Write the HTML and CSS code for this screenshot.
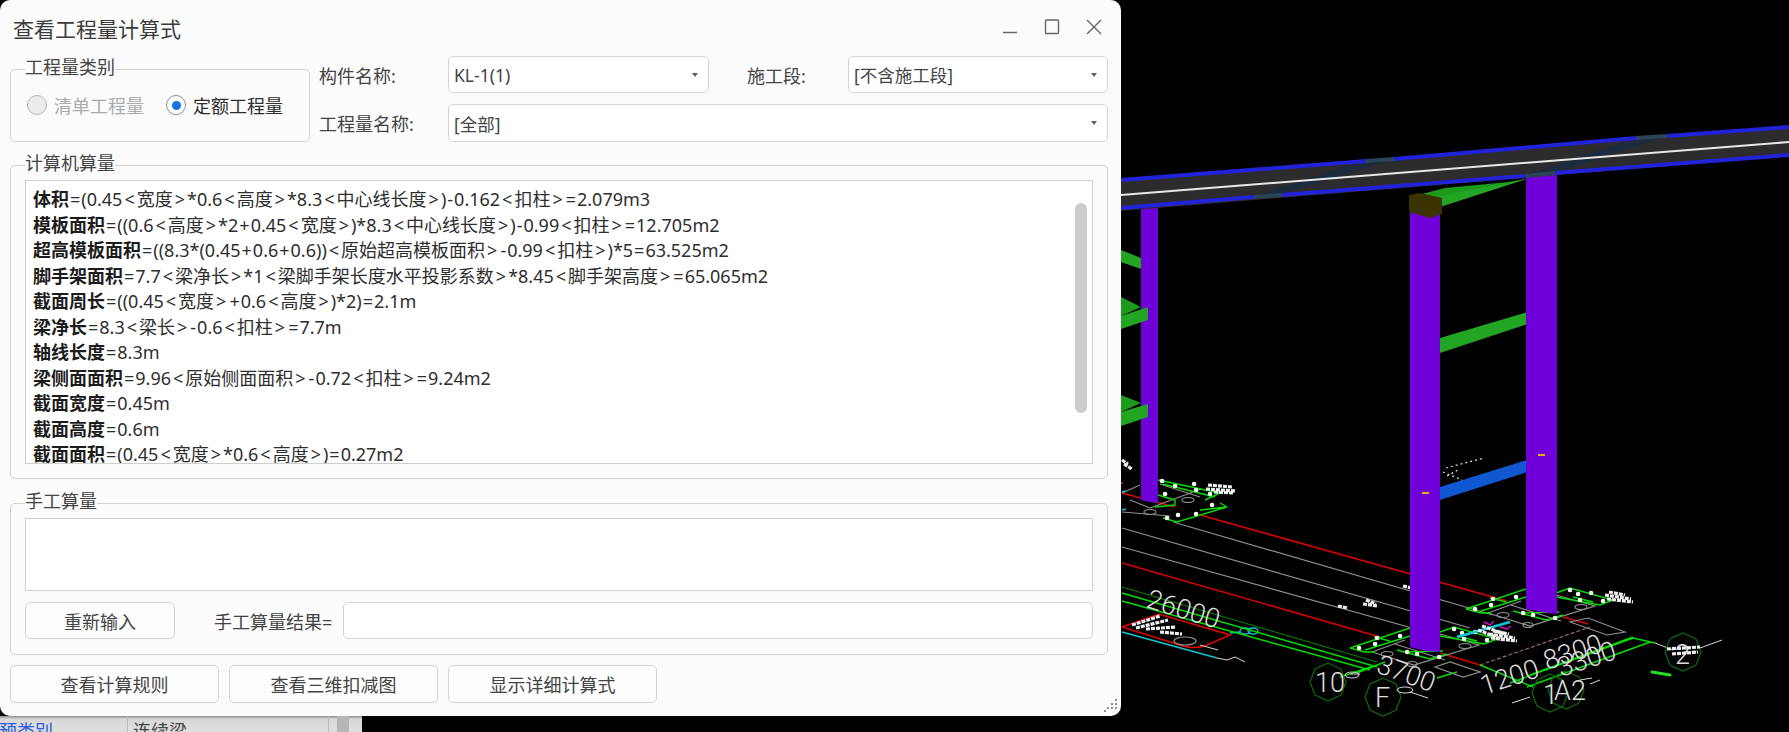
FILE: index.html
```html
<!DOCTYPE html>
<html lang="zh-CN">
<head>
<meta charset="utf-8">
<title>查看工程量计算式</title>
<link rel="stylesheet" href="styles.css">
</head>
<body>
<svg class="scene" width="1789" height="732" viewBox="0 0 1789 732" xmlns="http://www.w3.org/2000/svg">
  <defs>
    <g id="plate">
      <path class="gray" d="M-53 0L-11 13L54 -7L15 -18M-53 0L-20 -12M-30 -8L20 8"/>
      <ellipse class="gray" cx="-38" cy="2" rx="6" ry="2.5"/>
      <ellipse class="gray" cx="-13" cy="12" rx="5" ry="2.5"/>
      <ellipse class="gray" cx="40" cy="-6" rx="6" ry="2.5"/>
      <path class="green" d="M-75 -4L-15 -24M-75 -4L-60 0L-50 0M-60 -2L-15 -16M-51 -15L-35 -11M-28 -2L5 7L22 2M-20 0L18 -1M15 -20L29 -25L72 -13L59 -8L15 -16M32 -16L52 -11"/>
      <path class="dot" d="M-66 -4h.1M-48 -14h.1M-50 -8h.1M-25 -16h.1M-18 0h.1M14 5h.1M29 -23h.1M37 -19h.1M50 -20h.1M62 -12h.1M39 -13h.1M-8 2h.1"/>
      <path class="blob" d="M64 -18L90 -14M66 -14L92 -11M68 -21L84 -18"/>
    </g>
    <path id="oct" d="M0 -19L13 -13L18 0L13 13L0 19L-13 13L-18 0L-13 -13Z"/>
  </defs>

  <!-- floor plan lines -->
  <path class="red" d="M1200 515L1507 601M1122 493L1175 507"/>
  <path class="gray" d="M1173 522L1493 615M1122 528L1470 628M1122 547L1430 633"/>
  <path class="red" d="M1122 563L1380 637M1440 653L1480 665M1563 617L1588 624"/>
  <path class="redgray" d="M1480 665L1590 627"/>
  <path class="redline" d="M1122 627L1159 614L1230 635L1205 646Q1194 649 1183 646Z"/>
  <path class="cyan" d="M1122 632L1217 658M1230 633L1240 632"/>
  <ellipse class="cyan" cx="1245" cy="631" rx="5" ry="3"/>
  <ellipse class="cyan" cx="1253" cy="631" rx="5" ry="3"/>
  <path class="blob" d="M1132 625L1160 616M1136 628L1168 620M1146 629L1176 627M1160 632L1182 634"/>
  <path class="thin" d="M1217 658L1227 660L1235 657L1245 662M1200 645L1218 650"/>
  <ellipse class="gray" cx="1185" cy="641" rx="11" ry="4"/>
  <path class="dg" d="M1122 587L1377 662"/>
  <path class="green" d="M1122 593L1377 667M1122 601L1370 670M1377 665L1340 677M1385 662L1357 673"/>
  <path class="green" d="M1480 665L1533 687M1510 683L1633 638L1655 643M1527 687L1650 642M1530 675L1633 637M1437 678L1457 672"/>
  <path class="thin" d="M1655 643L1673 650M1350 674L1360 674"/>
  <path class="greenbar" d="M1652 672L1670 675"/>
  <path class="blob" d="M1403 586L1412 588M1363 604L1378 606M1366 600L1376 604M1338 606L1348 608"/>
  <path class="blob" d="M1124 464L1132 469M1122 460L1128 464"/>

  <!-- first column base -->
  <g class="foot-left">
    <path class="gray" d="M1122 493L1140 485M1130 500L1150 508M1122 512L1170 516M1150 508L1201 489M1160 484L1200 497"/>
    <ellipse class="gray" cx="1188" cy="500" rx="6" ry="2.5"/>
    <ellipse class="gray" cx="1150" cy="512" rx="6" ry="2.5"/>
    <path class="green" d="M1158 480L1220 493L1205 500M1163 484L1215 497M1158 495L1175 500L1175 505L1155 507M1227 507L1177 522L1163 518M1220 503L1227 507M1200 510L1227 507"/>
    <path class="dot" d="M1162 481h.1M1175 486h.1M1194 484h.1M1196 490h.1M1210 494h.1M1165 494h.1M1212 505h.1M1178 515h.1M1196 514h.1M1167 518h.1"/>
    <path class="blob" d="M1206 489L1236 491M1208 485L1232 487M1214 492L1234 493"/>
    <path class="cyan" d="M1122 492L1126 491M1122 510L1126 509"/>
    <path class="magenta" d="M1122 482L1122 484"/>
  </g>
  <use href="#plate" x="1425" y="652"/>
  <use href="#plate" x="1541" y="613"/>
  <path class="magenta" d="M1484 622L1490 625L1494 621M1500 627L1507 629L1511 626"/>
  <path class="cyan2" d="M1457 637L1510 622"/>
  <path class="blob" d="M1478 630L1503 640M1482 626L1505 634"/>
  <path class="gray" d="M1570 622L1588 618L1625 632L1607 635ZM1435 667L1450 662L1480 672L1463 677Z"/>

  <!-- structure -->
  <polygon class="c-green" points="1121,250 1141,258 1141,269 1121,262"/>
  <polygon class="c-purple" points="1141,205 1158,205 1158,503 1150,502 1141,500"/>
  <polygon class="c-green2" points="1121,297 1141,307 1121,316"/>
  <polygon class="c-green" points="1121,316 1148,307 1148,320 1121,329"/>
  <polygon class="c-green2" points="1121,395 1141,403 1121,412"/>
  <polygon class="c-green" points="1121,412 1148,404 1148,417 1121,426"/>

  <polygon class="c-green2" points="1418,195 1445,188 1520,181 1440,200"/>
  <polygon class="c-green" points="1440,196 1530,178 1440,207"/>
  <polygon class="c-green" points="1440,338 1534,310 1540,308 1540,320 1440,353"/>
  <polygon class="c-blue" points="1440,487 1540,456 1540,468 1440,500"/>
  <polygon class="c-purple" points="1410,212 1440,212 1440,652 1425,651 1410,647"/>
  <polygon class="c-purple" points="1526,172 1557,172 1557,614 1541,612 1526,609"/>
  <polygon class="c-cap" points="1409,195 1420,193 1442,198 1442,214 1430,218 1409,212"/>
  <path class="gold" d="M1422 493L1429 493M1538 455L1545 455"/>
  <path class="blob2" d="M1443 472L1462 480M1446 468L1484 458M1447 476L1458 470"/>

  <polygon class="c-road" points="1121,179 1789,127 1789,156 1121,211"/>
  <polygon class="c-slab" points="1282,194 1394,159 1366,160 1254,196"/>
  <polygon class="c-slab" points="1555,173 1667,136 1636,138 1525,175"/>
  <path class="blue" d="M1121 180L1366 161M1394 159L1636 138M1667 136L1789 127"/>
  <path class="blue" d="M1121 208L1254 197M1282 195L1525 176M1555 173L1789 155"/>
  <path class="slabedge" d="M1366 161L1394 159M1636 138L1667 136M1254 197L1282 195M1525 176L1555 173"/>
  <path class="white" d="M1121 195L1789 142"/>

  <g class="labels">
    <use href="#oct" class="oct" x="1328" y="682"/>
    <use href="#oct" class="oct" x="1383" y="697"/>
    <use href="#oct" class="oct" x="1550" y="693"/>
    <use href="#oct" class="oct" x="1566" y="690"/>
    <use href="#oct" class="oct" x="1683" y="652"/>
    <text x="1315" y="692">10</text>
    <text x="1375" y="707">F</text>
    <text x="1543" y="704">1</text>
    <text x="1554" y="700">A2</text>
    <text x="1675" y="664">2</text>
    <text transform="translate(1145 607) rotate(17)">26000</text>
    <text transform="translate(1375 672) rotate(20)">3700</text>
    <text transform="translate(1484 695) rotate(-18)">1200</text>
    <text transform="translate(1547 670) rotate(-18)">8300</text>
    <text transform="translate(1561 677) rotate(-18)">3300</text>
  </g>
  <path class="blob" d="M1667 649L1700 647M1672 654L1698 652"/>
  <path class="thin" d="M1700 648L1722 640M1600 680L1590 684M1530 697L1512 703M1580 680L1592 678"/>
  <ellipse class="thin" cx="1352" cy="675" rx="7" ry="3"/>
  <ellipse class="thin" cx="1405" cy="690" rx="8" ry="3"/>
  <path class="thin" d="M1410 692L1428 698"/>
</svg>

<div class="strip">
  <span class="strip-key">预类别</span>
  <span class="strip-val">连续梁</span>
  <span class="strip-bar"></span>
</div>

<main class="dialog">
  <header class="titlebar">
    <h1 class="title">查看工程量计算式</h1>
    <div class="win-btns">
      <svg class="win-icon" width="16" height="16" viewBox="0 0 16 16"><path d="M1 13.5H15"/></svg>
      <svg class="win-icon" width="16" height="16" viewBox="0 0 16 16"><rect x="1.5" y="1" width="13" height="13.5" rx="1"/></svg>
      <svg class="win-icon" width="16" height="16" viewBox="0 0 16 16"><path d="M1 1L15 15M15 1L1 15"/></svg>
    </div>
  </header>

  <section class="top-row">
    <fieldset class="group group-type">
      <legend>工程量类别</legend>
      <div class="radios">
        <label class="radio radio-off"><span class="radio-dot"></span>清单工程量</label>
        <label class="radio radio-on"><span class="radio-dot"></span>定额工程量</label>
      </div>
    </fieldset>
    <div class="fields">
      <span class="field-label">构件名称:</span>
      <div class="combo">KL-1(1)</div>
      <span class="field-label field-label-mid">施工段:</span>
      <div class="combo">[不含施工段]</div>
      <span class="field-label">工程量名称:</span>
      <div class="combo combo-wide">[全部]</div>
    </div>
  </section>

  <fieldset class="group group-auto">
    <legend>计算机算量</legend>
    <div class="formula-box">
      <p><b>体积</b><em>=</em>(0.45<i>&lt;</i>宽度<i>&gt;</i>*0.6<i>&lt;</i>高度<i>&gt;</i>*8.3<i>&lt;</i>中心线长度<i>&gt;</i>)<em>-</em>0.162<i>&lt;</i>扣柱<i>&gt;</i><em>=</em>2.079m3</p>
      <p><b>模板面积</b><em>=</em>((0.6<i>&lt;</i>高度<i>&gt;</i>*2<em>+</em>0.45<i>&lt;</i>宽度<i>&gt;</i>)*8.3<i>&lt;</i>中心线长度<i>&gt;</i>)<em>-</em>0.99<i>&lt;</i>扣柱<i>&gt;</i><em>=</em>12.705m2</p>
      <p><b>超高模板面积</b><em>=</em>((8.3*(0.45<em>+</em>0.6<em>+</em>0.6))<i>&lt;</i>原始超高模板面积<i>&gt;</i><em>-</em>0.99<i>&lt;</i>扣柱<i>&gt;</i>)*5<em>=</em>63.525m2</p>
      <p><b>脚手架面积</b><em>=</em>7.7<i>&lt;</i>梁净长<i>&gt;</i>*1<i>&lt;</i>梁脚手架长度水平投影系数<i>&gt;</i>*8.45<i>&lt;</i>脚手架高度<i>&gt;</i><em>=</em>65.065m2</p>
      <p><b>截面周长</b><em>=</em>((0.45<i>&lt;</i>宽度<i>&gt;</i><em>+</em>0.6<i>&lt;</i>高度<i>&gt;</i>)*2)<em>=</em>2.1m</p>
      <p><b>梁净长</b><em>=</em>8.3<i>&lt;</i>梁长<i>&gt;</i><em>-</em>0.6<i>&lt;</i>扣柱<i>&gt;</i><em>=</em>7.7m</p>
      <p><b>轴线长度</b><em>=</em>8.3m</p>
      <p><b>梁侧面面积</b><em>=</em>9.96<i>&lt;</i>原始侧面面积<i>&gt;</i><em>-</em>0.72<i>&lt;</i>扣柱<i>&gt;</i><em>=</em>9.24m2</p>
      <p><b>截面宽度</b><em>=</em>0.45m</p>
      <p><b>截面高度</b><em>=</em>0.6m</p>
      <p><b>截面面积</b><em>=</em>(0.45<i>&lt;</i>宽度<i>&gt;</i>*0.6<i>&lt;</i>高度<i>&gt;</i>)<em>=</em>0.27m2</p>
      <span class="scroll-thumb"></span>
    </div>
  </fieldset>

  <fieldset class="group group-manual">
    <legend>手工算量</legend>
    <div class="manual-box"></div>
    <div class="manual-row">
      <button class="btn btn-reset" type="button">重新输入</button>
      <span class="manual-label">手工算量结果=</span>
      <div class="manual-input"></div>
    </div>
  </fieldset>

  <footer class="actions">
    <button class="btn btn-action" type="button">查看计算规则</button>
    <button class="btn btn-action" type="button">查看三维扣减图</button>
    <button class="btn btn-action" type="button">显示详细计算式</button>
  </footer>

  <svg class="grip" width="14" height="14" viewBox="0 0 14 14"><path d="M11 1h2v2h-2zM7 5h2v2H7zM11 5h2v2h-2zM3 9h2v2H3zM7 9h2v2H7zM11 9h2v2h-2zM0 12h2v2H0z"/></svg>
</main>
</body>
</html>
```

FILE: styles.css
```css
* { box-sizing: border-box; }
html, body { margin: 0; height: 100%; }
body {
  background: #000;
  overflow: hidden;
  position: relative;
  width: 1789px;
  height: 732px;
  font-family: "Noto Sans", "Noto Sans CJK SC", sans-serif;
  font-size: 18px;
  color: #3a3a3a;
}

/* CAD scene */
.scene { position: absolute; left: 0; top: 0; display: block; }
.scene path, .scene ellipse, .scene circle { fill: none; }
.red { stroke: #d80000; stroke-width: 1.6; }
.redline { stroke: #e00000; stroke-width: 1.6; }
.redgray { stroke: #8c6a6a; stroke-width: 1.2; stroke-dasharray: 4 2; }
.gray { stroke: #909090; stroke-width: 1.2; }
.green { stroke: #00e000; stroke-width: 1.4; }
.greenbar { stroke: #22e022; stroke-width: 3; stroke-linecap: round; }
.dg { stroke: #008a00; stroke-width: 1; }
.cyan { stroke: #10c8d8; stroke-width: 1.3; }
.cyan2 { stroke: #10c8d8; stroke-width: 2.5; }
.magenta { stroke: #d010d0; stroke-width: 1.4; }
.thin { stroke: #d8d8d8; stroke-width: 1; }
.dot { stroke: #f4fff4; stroke-width: 4.5; stroke-linecap: round; }
.blob { stroke: #f0f0f0; stroke-width: 3.2; stroke-dasharray: 4 1; }
.blob2 { stroke: #ddd; stroke-width: 1.2; stroke-dasharray: 2 3; }
.gold { stroke: #e8b000; stroke-width: 2; }
.blue { stroke: #2222d8; stroke-width: 4; }
.slabedge { stroke: #2b4458; stroke-width: 4; }
.white { stroke: #e8e8e8; stroke-width: 2; }
.c-purple { fill: #6f00d9; }
.c-green { fill: #22a522; }
.c-green2 { fill: #1b9a1b; }
.c-blue { fill: #0f58d2; }
.c-cap { fill: #3c3400; }
.c-road { fill: #2c2c2e; }
.c-slab { fill: #1d2b3c; }
.labels text {
  fill: #dedede;
  font-family: Roboto, sans-serif;
  font-weight: 300;
  font-size: 27px;
}
.scene .oct { fill: none; stroke: #0c6a0c; stroke-width: 1.2; }

/* Panel peeking out below the dialog */
.strip {
  position: absolute;
  left: 0;
  top: 716px;
  width: 362px;
  height: 16px;
  background: linear-gradient(#8a8a8a, #d8d8d8 3px, #dedede);
  overflow: hidden;
  font-size: 18px;
  line-height: 30px;
}
.strip-key { position: absolute; left: -1px; top: 0; color: #2a5be0; }
.strip-val { position: absolute; left: 133px; top: 0; color: #444; }
.strip-val::before {
  content: "";
  position: absolute;
  left: -6px;
  top: 0;
  height: 30px;
  border-left: 1px solid #bbb;
}
.strip-val::after {
  content: "";
  position: absolute;
  left: 195px;
  top: 0;
  height: 30px;
  border-left: 1px solid #bbb;
}
.strip-bar {
  position: absolute;
  left: 337px;
  top: 0;
  width: 12px;
  height: 16px;
  background: #b6b6b6;
  box-shadow: 17px 0 0 -16px #aaa;
}

/* Dialog window */
.dialog {
  position: absolute;
  left: 0;
  top: 0;
  width: 1121px;
  height: 716px;
  padding: 0 13px 0 10px;
  background: #fbfbfb;
  border-radius: 10px;
  display: flex;
  flex-direction: column;
}
.titlebar {
  height: 56px;
  flex: none;
  display: flex;
  align-items: flex-start;
  justify-content: space-between;
}
.title {
  margin: 14px 0 0 3px;
  font-size: 21px;
  line-height: 30px;
  font-weight: 400;
  color: #3c3c3c;
}
.win-btns {
  display: flex;
  gap: 26px;
  margin: 19px 6px 0 0;
}
.win-icon { fill: none; stroke: #666; stroke-width: 1.4; display: block; }

/* Group boxes */
.group {
  margin: 0;
  min-width: 0;
  border: 1px solid #d2d2d2;
  border-radius: 5px;
  flex: none;
}
.group legend {
  padding: 0 0 4px;
  margin-left: 0;
  font-size: 18px;
  line-height: 22px;
  color: #444;
}

.top-row { display: flex; height: 86px; flex: none; }
.group-type { width: 300px; height: 86px; padding: 11px 0 0 16px; }
.group-type legend { margin-left: -2px; }
.radios { display: flex; gap: 22px; }
.radio { display: flex; align-items: center; gap: 7px; height: 24px; font-size: 18px; white-space: nowrap; }
.radio-dot {
  width: 20px;
  height: 20px;
  border-radius: 50%;
  display: flex;
  align-items: center;
  justify-content: center;
}
.radio-off { color: #ababab; }
.radio-off .radio-dot { background: #ececec; border: 1.5px solid #b4b4b4; }
.radio-on { color: #2e2e2e; }
.radio-on .radio-dot { background: #fff; border: 1.5px solid #8f8f8f; }
.radio-on .radio-dot::after {
  content: "";
  width: 9px;
  height: 9px;
  border-radius: 50%;
  background: #1473e6;
}

.fields {
  margin-left: 9px;
  display: grid;
  grid-template-columns: 129px 261px 139px 260px;
  grid-template-rows: 37px 38px;
  row-gap: 11px;
  align-items: center;
}
.field-label { font-size: 18px; color: #444; white-space: nowrap; }
.field-label-mid { padding-left: 38px; }
.combo {
  height: 100%;
  display: flex;
  align-items: center;
  padding-left: 5px;
  background: #fff;
  border: 1px solid #d4d4d4;
  border-radius: 5px;
  color: #444;
  font-size: 17.5px;
  position: relative;
}
.combo::after {
  content: "";
  position: absolute;
  right: 10px;
  top: 50%;
  margin-top: -2px;
  border-left: 3.5px solid transparent;
  border-right: 3.5px solid transparent;
  border-top: 4px solid #5a5f6a;
}
.combo-wide { grid-column: 2 / span 3; }

.group-auto { margin-top: 10px; height: 327px; padding: 2px 14px 14px; }
.formula-box {
  position: relative;
  height: 284px;
  padding: 6px 0 0 7px;
  background: #fff;
  border: 1px solid #cfcfcf;
  overflow: hidden;
  color: #2e2e2e;
}
.formula-box p { margin: 0; line-height: 25.5px; white-space: nowrap; }
.formula-box b { font-weight: 700; color: #1c1c1c; font-size: 18px; }
.formula-box i { font-style: normal; padding: 0 2px; }
.formula-box em { font-style: normal; padding: 0 1px; }
.scroll-thumb {
  position: absolute;
  right: 5px;
  top: 22px;
  width: 12px;
  height: 210px;
  border-radius: 6px;
  background: #cdcdcd;
}

.group-manual { margin-top: 11px; height: 165px; padding: 2px 14px 0; }
.manual-box { height: 73px; background: #fff; border: 1px solid #cfcfcf; }
.manual-row { display: flex; align-items: center; height: 37px; margin-top: 11px; }
.manual-label { margin-left: 39px; width: 129px; font-size: 18px; color: #444; white-space: nowrap; }
.manual-input {
  flex: 1;
  height: 37px;
  background: #fff;
  border: 1px solid #d4d4d4;
  border-radius: 5px;
}

.btn {
  margin: 0;
  padding: 0;
  font: inherit;
  font-size: 18px;
  color: #444;
  background: #fdfdfd;
  border: 1px solid #d4d4d4;
  border-radius: 5px;
}
.btn-reset { width: 150px; height: 37px; }
.actions { display: flex; gap: 10px; margin-top: 10px; flex: none; }
.btn-action { width: 209px; height: 38px; }

.grip { position: absolute; right: 3px; bottom: 4px; fill: #8a8f98; }
```
